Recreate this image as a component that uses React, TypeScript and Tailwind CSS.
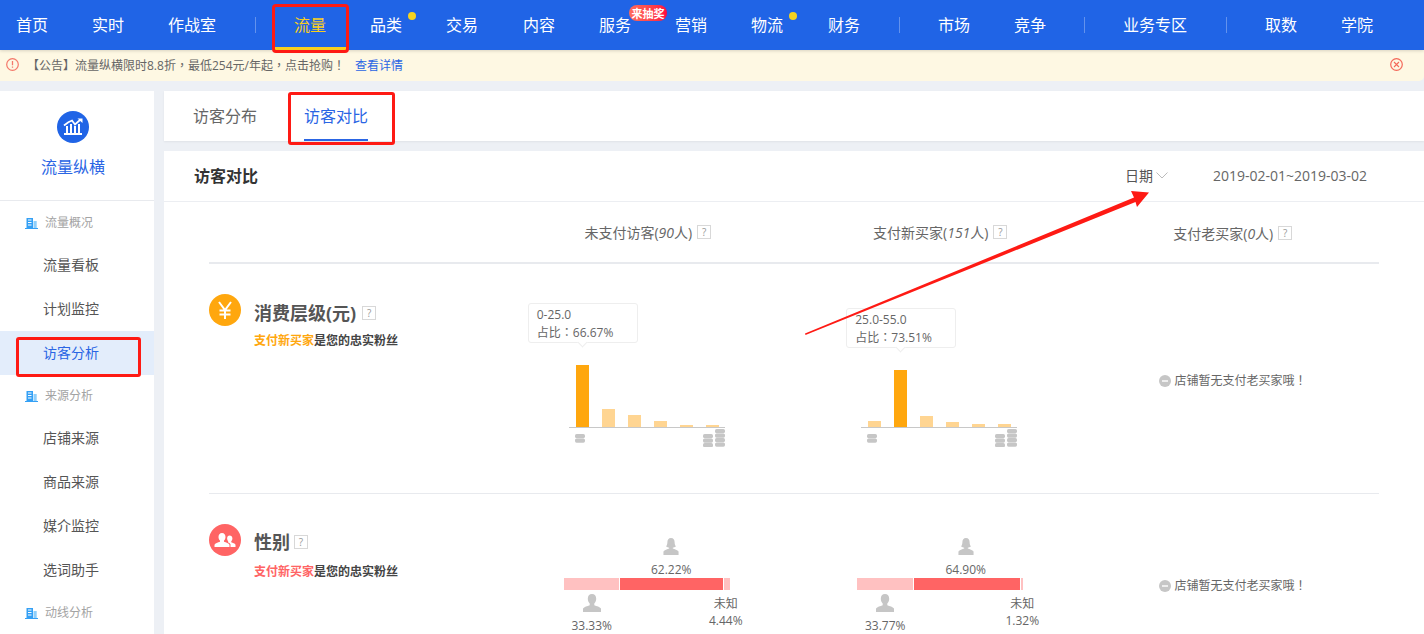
import React from "react";

const font = "font-['Open_Sans','Noto_Sans_CJK_SC',sans-serif]";

function Punct({ c }: { c: string }) {
  return <span className="font-['Noto_Sans_CJK_TC',sans-serif]">{c}</span>;
}

function NavItem({ label, active, wide, dot, badge }: { label: string; active?: boolean; wide?: boolean; dot?: boolean; badge?: boolean }) {
  return (
    <div className={`relative flex h-[50px] items-center justify-center text-[16px] ${wide ? "w-[108px]" : "w-[76px]"} ${active ? "border-b-[3px] border-[#f8cf1d] pt-[3px] text-[#f8cf1d]" : "text-white"}`}>
      {label}
      {dot && <span className="absolute left-[60px] top-[12px] h-2 w-2 rounded-full bg-[#f5d31f]" />}
      {badge && (
        <span className="absolute left-[52px] top-[5px] flex h-[16px] w-[38px] items-center justify-center rounded-full bg-gradient-to-r from-[#ff6a5a] to-[#ff0040] text-[11px] font-bold leading-none text-white">
          来抽奖
        </span>
      )}
    </div>
  );
}

function NavDivider({ w }: { w: string }) {
  return (
    <div className={`flex h-[50px] items-center justify-center ${w}`}>
      <span className="h-4 w-px bg-white/30" />
    </div>
  );
}

function SideSection({ label, h }: { label: string; h: string }) {
  return (
    <div className={`flex items-center pl-[25px] text-[12px] text-[#a3a3a3] ${h}`}>
      <svg width="13" height="12" viewBox="0 0 13 12" className="mr-[7px]">
        <path d="M1.500 1h6.500v10H1.500z" fill="#34a0f5" />
        <path d="M8.500 4h3.200v7H8.500z" fill="#8fcffb" />
        <path d="M3 3h3.500M3 5.500h3.500M3 8h3.500" stroke="#fff" strokeWidth="1" />
        <path d="M0 11.500h13" stroke="#34a0f5" strokeWidth="1" />
      </svg>
      {label}
    </div>
  );
}

function SideItem({ label, active }: { label: string; active?: boolean }) {
  return (
    <div className={`flex h-[44px] items-center pb-[2px] pl-[43px] text-[14px] ${active ? "bg-[#e3edfb] text-[#2a65e4]" : "text-[#555]"}`}>
      {label}
    </div>
  );
}

function Help({ ml = "ml-[5px]" }: { ml?: string }) {
  return (
    <span className={`inline-flex h-[14px] w-[14px] items-center justify-center border border-[#d8d8d8] text-[10px] font-normal leading-none text-[#999] ${ml}`}>
      ?
    </span>
  );
}

function ColHead({ name, count, up }: { name: string; count: string; up?: boolean }) {
  return (
    <div className={`flex items-center justify-center text-[14px] text-[#666] ${up ? "pt-0" : "pt-[2px]"}`}>
      {name}(<i>{count}</i>人)
      <Help />
    </div>
  );
}

function Coins({ layers }: { layers: number }) {
  const h = 4.200 + (layers - 1) * 4.500;
  return (
    <svg width="10" height={h} viewBox={`0 0 10 ${h}`} className="block">
      {Array.from({ length: layers }).map((_, i) => (
        <rect key={i} x="0" y={i * 4.500} width="10" height="4.200" rx="1.600" fill="#c6c6c6" />
      ))}
    </svg>
  );
}

function BarChart({ heights, hi, tipClass, range, pct }: { heights: number[]; hi: number; tipClass: string; range: string; pct: string }) {
  return (
    <div className="mr-[2px] mt-[84px] flex w-[156px] flex-col">
      <div className="relative flex h-[80px] items-end gap-[13px] border-b border-[#c8c8c8] pl-[7px]">
        {heights.map((h, i) => (
          <div key={i} className={`w-[13px] ${i === hi ? "bg-[#ffa70e]" : "bg-[#ffd592]"}`} style={{ height: h }} />
        ))}
        <div className={`absolute flex h-[40px] w-[110px] flex-col justify-center rounded-[3px] border border-[#eeeeee] bg-white pl-2 text-[12px] leading-[17px] text-[#666] ${tipClass}`}>
          <span>{range}</span>
          <span>占比<Punct c="：" />{pct}</span>
          <span className="absolute bottom-[-4px] left-[50px] h-[7px] w-[7px] rotate-45 border-b border-r border-[#eeeeee] bg-white" />
        </div>
      </div>
      <div className="flex justify-between pl-[6px]">
        <div className="pt-[6px]"><Coins layers={2} /></div>
        <div className="flex items-end gap-[2px] pt-[1px]">
          <Coins layers={3} />
          <Coins layers={4} />
        </div>
      </div>
    </div>
  );
}

function Female() {
  return (
    <svg width="18" height="18" viewBox="0 0 18 18" className="block">
      <path d="M9 0c2.600 0 3.800 1.900 3.800 4.300 0 1.900.5 3.600 1.400 4.700-1 .8-2.200 1.100-3.300 1.200v1c2 .7 5 1.600 6.100 3.100V18H1v-3.700c1.100-1.500 4.100-2.400 6.100-3.100v-1C6 10.100 4.800 9.800 3.800 9c.9-1.100 1.400-2.800 1.400-4.700C5.200 1.900 6.400 0 9 0z" fill="#c6c6c6" />
    </svg>
  );
}

function Male() {
  return (
    <svg width="20" height="18" viewBox="0 0 20 18" className="block">
      <path d="M10 0c2.700 0 4.200 2 4.200 4.800 0 2-.8 3.700-1.900 4.700v1.700c2.300.8 5.600 1.700 6.700 3.300V18H1v-3.500c1.100-1.600 4.400-2.500 6.700-3.300V9.500C6.600 8.500 5.800 6.800 5.800 4.800 5.800 2 7.300 0 10 0z" fill="#c6c6c6" />
    </svg>
  );
}

function Gender({ femalePct, malePct, unknownPct, redW, unkW, topPad, unkMargin, shift }: { femalePct: string; malePct: string; unknownPct: string; redW: string; unkW: string; topPad: string; unkMargin: string; shift: string }) {
  return (
    <div className={`flex w-[166px] flex-col pt-[44px] text-[12px] text-[#666] ${shift}`}>
      <div className={`flex h-[40px] flex-col items-center ${topPad}`}>
        <Female />
        <span className="mt-[7px] leading-[16px]">{femalePct}</span>
      </div>
      <div className="flex h-[12px] gap-px">
        <div className="w-[56px] bg-[#ffc1c1]" />
        <div className={`bg-[#ff6464] ${redW}`} />
        <div className={`bg-[#ffc1c1] ${unkW}`} />
      </div>
      <div className="flex justify-between pt-[4px]">
        <div className="flex w-[56px] flex-col items-center">
          <Male />
          <span className="mt-[6px] leading-[16px]">{malePct}</span>
        </div>
        <div className={`flex w-[44px] flex-col items-center pt-[2px] ${unkMargin}`}>
          <span className="leading-[16px]">未知</span>
          <span className="mt-[1px] leading-[16px]">{unknownPct}</span>
        </div>
      </div>
    </div>
  );
}

function NoData({ pt }: { pt: string }) {
  return (
    <div className={`flex items-center pl-[72px] text-[12px] leading-[18px] text-[#666] ${pt}`}>
      <svg width="12" height="12" viewBox="0 0 12 12" className="mr-[4px]">
        <circle cx="6" cy="6" r="6" fill="#c6c6c6" />
        <path d="M3 6h6" stroke="#fff" strokeWidth="1.400" />
      </svg>
      <span>店铺暂无支付老买家哦<Punct c="！" /></span>
    </div>
  );
}

function Label({ icon, bg, title, sub, color, subMt, titleMt, pt, helpMl }: { icon: React.ReactNode; bg: string; title: string; sub: string; color: string; subMt: string; titleMt: string; pt: string; helpMl: string }) {
  return (
    <div className={`flex gap-[13px] ${pt}`}>
      <div className={`flex h-[32px] w-[32px] items-center justify-center rounded-full ${bg}`}>{icon}</div>
      <div className={titleMt}>
        <div className="flex items-center text-[18px] font-bold leading-[20px] text-[#555]">
          {title}
          <Help ml={helpMl} />
        </div>
        <div className={`text-[12px] font-bold leading-[16px] text-[#444] ${subMt}`}>
          <span className={color}>{sub}</span>是您的忠实粉丝
        </div>
      </div>
    </div>
  );
}

export default function App() {
  return (
    <div className={`relative h-[634px] w-[1424px] overflow-hidden bg-[#edf0f5] ${font}`}>
      {/* top nav */}
      <nav className="relative z-10 flex h-[50px] bg-[#2064e6] shadow-[0_1px_3px_rgba(0,0,0,0.15)]">
        <div className="flex h-[50px] w-[70px] items-center pl-[16px] text-[16px] text-white">首页</div>
        <NavItem label="实时" />
        <div className="flex h-[50px] w-[92px] items-center justify-center text-[16px] text-white">作战室</div>
        <NavDivider w="w-[34px]" />
        <NavItem label="流量" active />
        <NavItem label="品类" dot />
        <NavItem label="交易" />
        <div className="w-px" />
        <NavItem label="内容" />
        <NavItem label="服务" badge />
        <NavItem label="营销" />
        <NavItem label="物流" dot />
        <div className="w-px" />
        <NavItem label="财务" />
        <NavDivider w="w-[34px]" />
        <NavItem label="市场" />
        <NavItem label="竞争" />
        <NavDivider w="w-[33px]" />
        <NavItem label="业务专区" wide />
        <NavDivider w="w-[34px]" />
        <NavItem label="取数" />
        <NavItem label="学院" />
      </nav>

      {/* notice */}
      <div className="flex h-[31px] items-center rounded-br-[5px] bg-[#fef8e3] pl-[6px] pr-[21px] text-[12px] text-[#666]">
        <svg width="13" height="13" viewBox="0 0 13 13" className="mb-[2px] mr-[8px]">
          <circle cx="6.500" cy="6.500" r="5.800" fill="none" stroke="#f4786a" strokeWidth="1.200" />
          <path d="M6.500 3v4.300M6.500 8.500v1.300" stroke="#f4786a" strokeWidth="1.300" />
        </svg>
        <span>【公告】流量纵横限时8.8折<Punct c="，" />最低254元/年起<Punct c="，" />点击抢购<Punct c="！" /></span>
        <span className="ml-[10px] text-[#2a65e4]">查看详情</span>
        <svg width="13" height="13" viewBox="0 0 13 13" className="mb-[2px] ml-auto">
          <circle cx="6.500" cy="6.500" r="5.800" fill="none" stroke="#f4695a" strokeWidth="1.200" />
          <path d="M4 4l5 5M9 4l-5 5" stroke="#f4695a" strokeWidth="1.100" />
        </svg>
      </div>

      <div className="mt-[10px] flex gap-[10px]">
        {/* sidebar */}
        <aside className="h-[543px] w-[154px] shrink-0 bg-white">
          <div className="flex h-[110px] flex-col items-center border-b border-[#e8eaee] pr-[8px] pt-[20px]">
            <div className="flex h-[32px] w-[32px] items-center justify-center rounded-full bg-[#2064e6]">
              <svg width="24" height="22" viewBox="0 0 24 22">
                <path d="M3 9.500C6 7 8 5.500 11 4.500l3 4 5-4.500" fill="none" stroke="#fff" strokeWidth="1.800" />
                <path d="M16.500 2.500h5v4.500z" fill="#fff" />
                <path d="M6 10v7M10 8v9M14 10v7M18 8v9" stroke="#fff" strokeWidth="2" />
                <path d="M3 18h18" stroke="#fff" strokeWidth="2" />
              </svg>
            </div>
            <div className="mt-[10px] text-[16px] leading-[28px] text-[#2a65e4]">流量纵横</div>
          </div>
          <SideSection label="流量概况" h="h-[42px] pt-[2px]" />
          <SideItem label="流量看板" />
          <SideItem label="计划监控" />
          <SideItem label="访客分析" active />
          <SideSection label="来源分析" h="h-[41px]" />
          <SideItem label="店铺来源" />
          <SideItem label="商品来源" />
          <SideItem label="媒介监控" />
          <SideItem label="选词助手" />
          <SideSection label="动线分析" h="h-[42px]" />
        </aside>

        {/* main */}
        <main className="min-w-0 flex-1">
          <div className="flex h-[50px] gap-[47px] bg-white pl-[29px] text-[16px] shadow-[0_1px_2px_rgba(0,0,0,0.06)]">
            <div className="flex h-[50px] items-center pb-px text-[#666]">访客分布</div>
            <div className="flex h-[50px] items-center border-b-2 border-[#2a65e4] pt-px text-[#2a65e4]">访客对比</div>
          </div>

          <section className="mt-[10px] h-[483px] bg-white">
            <div className="flex h-[51px] items-center border-b border-[#eceef2] pb-px pl-[30px] pr-[57px]">
              <span className="text-[16px] font-bold text-[#333]">访客对比</span>
              <span className="ml-auto text-[14px] text-[#555]">日期</span>
              <svg width="12" height="7" viewBox="0 0 12 7" className="ml-[3px] mr-[45px]">
                <path d="M.5.500L6 6l5.500-5.500" fill="none" stroke="#bbb" strokeWidth="1" />
              </svg>
              <span className="text-[14px] text-[#666]">2019-02-01~2019-03-02</span>
            </div>

            <div className="pl-[45px] pr-[45px]">
              <div className="grid h-[62px] grid-cols-4 items-center border-b-2 border-[#e8eaee]">
                <div />
                <ColHead name="未支付访客" count="90" up />
                <ColHead name="支付新买家" count="151" up />
                <ColHead name="支付老买家" count="0" />
              </div>

              <div className="grid h-[230px] grid-cols-4 border-b border-[#e8eaee]">
                <Label
                  pt="pt-[30px]"
                  titleMt="mt-[9px]"
                  subMt="mt-[10px]"
                  helpMl="ml-[6px]"
                  bg="bg-[#ffa70e]"
                  color="text-[#ffa70e]"
                  title="消费层级(元)"
                  sub="支付新买家"
                  icon={
                    <svg width="18" height="20" viewBox="0 0 18 20">
                      <path d="M3 2l6 8 6-8M9 10v9M3.500 10.500h11M3.500 14.500h11" fill="none" stroke="#fff" strokeWidth="2" />
                    </svg>
                  }
                />
                <div className="flex justify-center">
                  <BarChart heights={[62, 18, 12, 6, 2, 2]} hi={0} tipClass="left-[-41px] top-[-45px]" range="0-25.0" pct="66.67%" />
                </div>
                <div className="flex justify-center">
                  <BarChart heights={[6, 57, 11, 5, 3, 3]} hi={1} tipClass="left-[-15px] top-[-40px]" range="25.0-55.0" pct="73.51%" />
                </div>
                <NoData pt="pt-[107px] self-start" />
              </div>

              <div className="grid grid-cols-4">
                <Label
                  pt="pt-[30px]"
                  titleMt="mt-[8px]"
                  subMt="mt-[12px]"
                  helpMl="ml-[4px]"
                  bg="bg-[#ff6464]"
                  color="text-[#ff6464]"
                  title="性别"
                  sub="支付新买家"
                  icon={
                    <svg width="22" height="16" viewBox="0 0 22 16">
                      <path d="M8 1c2.300 0 3.500 1.700 3.500 4 0 1.500-.6 2.800-1.500 3.600v1.200c2 .6 5 1.400 5.500 3V15H.500v-2.200c.5-1.600 3.500-2.400 5.500-3V8.600C5.100 7.800 4.500 6.500 4.500 5c0-2.300 1.200-4 3.500-4z" fill="#fff" />
                      <path d="M15.500 3.500c1.800 0 2.900 1.300 2.900 3.100 0 1.200-.5 2.200-1.200 2.800v.9c1.500.5 3.800 1.100 4.300 2.400V15h-5v-2.800c-.5-.8-1.500-1.400-2.600-1.900.2-.4.300-.6.300-.9-.7-.7-1.100-1.700-1.100-2.800 0-1.800 1-3.100 2.400-3.100z" fill="#fff" />
                    </svg>
                  }
                />
                <div className="flex justify-center">
                  <Gender shift="mr-[2px]" femalePct="62.22%" malePct="33.33%" unknownPct="4.44%" redW="w-[103px]" unkW="w-[6px]" topPad="ml-[56px] w-[103px]" unkMargin="mr-[-18px]" />
                </div>
                <div className="flex justify-center">
                  <Gender shift="" femalePct="64.90%" malePct="33.77%" unknownPct="1.32%" redW="w-[107px]" unkW="w-[2px]" topPad="ml-[56px] w-[105px]" unkMargin="mr-[-21px]" />
                </div>
                <NoData pt="pt-[82px] self-start" />
              </div>
            </div>
          </section>
        </main>
      </div>

      {/* red annotations */}
      <div className="absolute left-[272px] top-[4px] z-20 h-[49px] w-[77px] rounded-[4px] border-[3px] border-[#fe1a14]" />
      <div className="absolute left-[288px] top-[92px] z-20 h-[53px] w-[107px] rounded-[3px] border-[3px] border-[#fe1a14]" />
      <div className="absolute left-[16px] top-[337px] z-20 h-[40px] w-[125px] rounded-[3px] border-[3px] border-[#fe1a14]" />
      <svg width="1424" height="634" viewBox="0 0 1424 634" className="pointer-events-none absolute left-0 top-0 z-20">
        <polygon points="805,333.500 1134,197.500 1131,191 1149,192.500 1137,207 1135.500,202 805.500,335" fill="#fe1a14" />
      </svg>
    </div>
  );
}
